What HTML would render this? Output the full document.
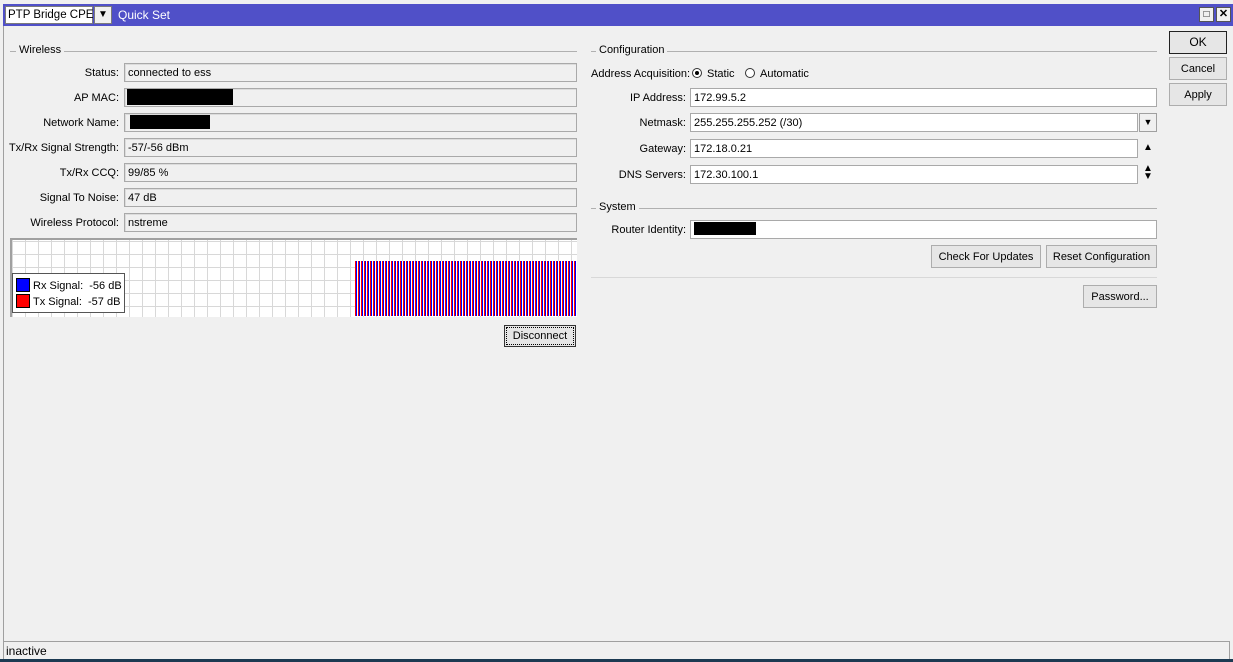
<!DOCTYPE html>
<html><head><style>
*{box-sizing:border-box}
body{margin:0;width:1233px;height:662px;background:#f0f0f0;font-family:"Liberation Sans",Tahoma,sans-serif;font-size:11px;color:#000;position:relative;overflow:hidden}
.a{position:absolute;white-space:nowrap}
.lbl{position:absolute;text-align:right;white-space:nowrap;line-height:20px}
.ro{position:absolute;height:19px;border:1px solid #a9a9a9;background:#f0f0f0;padding-left:3px;line-height:18px;box-shadow:inset 1px 1px 0 #dcdcdc;white-space:nowrap}
.ed{position:absolute;height:19px;border:1px solid #a9a9a9;background:#fff;padding-left:3px;line-height:18px;white-space:nowrap}
.btn{position:absolute;border:1px solid #adadad;background:#e6e6e6;text-align:center;line-height:19px;white-space:nowrap}
.hd{position:absolute;height:1px;background:#b0b0b0}
.black{position:absolute;background:#000}
</style></head><body>
<div class="a" style="left:0;top:0;width:1233px;height:4px;background:#f0f0f0"></div>
<div class="a" style="left:3px;top:4px;width:1230px;height:22px;background:#5050c8"></div>
<div class="a" style="left:5px;top:6px;width:88px;height:18px;background:#fff;border:1px solid #7a7a7a;padding-left:2px;line-height:16px;font-size:11.5px">PTP Bridge CPE</div>
<div class="a" style="left:94px;top:6px;width:18px;height:18px;background:#f0f0f0;border:1px solid #7a7a7a;text-align:center;line-height:15px;font-size:10px">&#9660;</div>
<div class="a" style="left:118px;top:8px;color:#fff;line-height:14px;font-size:12px">Quick Set</div>
<div class="a" style="left:1199px;top:7px;width:15px;height:15px;background:#f0f0f0;border:1px solid #555;font-size:10px;text-align:center;line-height:13px">&#9633;</div>
<div class="a" style="left:1216px;top:7px;width:15px;height:15px;background:#f0f0f0;border:1px solid #555;font-size:11px;font-weight:bold;text-align:center;line-height:13px">✕</div>
<div class="a" style="left:3px;top:26px;width:1px;height:633px;background:#a0a0a0"></div>

<div class="hd" style="left:10px;top:51px;width:567px"></div>
<div class="a" style="left:16px;top:44px;padding:0 3px;background:#f0f0f0">Wireless</div>
<div class="lbl" style="right:1114px;top:63px">Status:</div><div class="ro" style="left:124px;top:63px;width:453px">connected to ess</div>
<div class="lbl" style="right:1114px;top:88px">AP MAC:</div><div class="ro" style="left:124px;top:88px;width:453px"></div><div class="black" style="left:127px;top:89px;width:106px;height:16px"></div>
<div class="lbl" style="right:1114px;top:113px">Network Name:</div><div class="ro" style="left:124px;top:113px;width:453px"></div><div class="black" style="left:130px;top:115px;width:80px;height:14px"></div>
<div class="lbl" style="right:1114px;top:138px">Tx/Rx Signal Strength:</div><div class="ro" style="left:124px;top:138px;width:453px">-57/-56 dBm</div>
<div class="lbl" style="right:1114px;top:163px">Tx/Rx CCQ:</div><div class="ro" style="left:124px;top:163px;width:453px">99/85 %</div>
<div class="lbl" style="right:1114px;top:188px">Signal To Noise:</div><div class="ro" style="left:124px;top:188px;width:453px">47 dB</div>
<div class="lbl" style="right:1114px;top:213px">Wireless Protocol:</div><div class="ro" style="left:124px;top:213px;width:453px">nstreme</div>

<div class="a" style="left:10px;top:238px;width:567px;height:79px;border-top:2px solid #a0a0a0;border-left:2px solid #a0a0a0;background-color:#fff;background-image:linear-gradient(90deg,#d8d8d8 1px,transparent 1px),linear-gradient(#d8d8d8 1px,transparent 1px);background-size:13px 13px;background-position:0 1px"></div>
<div class="a" style="left:355px;top:261px;width:222px;height:55px;background:repeating-linear-gradient(90deg,#f00 0 1px,#00f 1px 2px,#fff 2px 3px)"></div>
<div class="a" style="left:12px;top:273px;width:113px;height:40px;background:#fff;border:1px solid #555"></div>
<div class="a" style="left:16px;top:278px;width:14px;height:14px;background:#00f;border:1px solid #000"></div>
<div class="a" style="left:16px;top:294px;width:14px;height:14px;background:#f00;border:1px solid #000"></div>
<div class="a" style="left:33px;top:279px;line-height:14px">Rx Signal:&nbsp; -56 dB</div>
<div class="a" style="left:33px;top:295px;line-height:14px">Tx Signal:&nbsp; -57 dB</div>
<div class="btn" style="left:504px;top:325px;width:72px;height:22px;border:1px solid #333;outline:1px dotted #000;outline-offset:-3px;line-height:21px">Disconnect</div>

<div class="hd" style="left:591px;top:51px;width:566px"></div>
<div class="a" style="left:596px;top:44px;padding:0 3px;background:#f0f0f0">Configuration</div>
<div class="lbl" style="left:591px;top:64px">Address Acquisition:</div>
<div class="a" style="left:692px;top:68px;width:10px;height:10px;border-radius:50%;background:#fff;border:1px solid #333"></div><div class="a" style="left:695px;top:71px;width:4px;height:4px;border-radius:50%;background:#000"></div>
<div class="a" style="left:707px;top:64px;line-height:20px">Static</div>
<div class="a" style="left:745px;top:68px;width:10px;height:10px;border-radius:50%;background:#fff;border:1px solid #333"></div>
<div class="a" style="left:760px;top:64px;line-height:20px">Automatic</div>
<div class="lbl" style="right:547px;top:88px">IP Address:</div><div class="ed" style="left:690px;top:88px;width:467px">172.99.5.2</div>
<div class="lbl" style="right:547px;top:113px">Netmask:</div><div class="ed" style="left:690px;top:113px;width:448px">255.255.255.252 (/30)</div>
<div class="a" style="left:1139px;top:113px;width:18px;height:19px;border:1px solid #a0a0a0;background:#f0f0f0;text-align:center;font-size:9px;line-height:17px">&#9660;</div>
<div class="lbl" style="right:547px;top:139px">Gateway:</div><div class="ed" style="left:690px;top:139px;width:448px">172.18.0.21</div>
<div class="a" style="left:1143px;top:141px;font-size:10px;line-height:14px">&#9650;</div>
<div class="lbl" style="right:547px;top:165px">DNS Servers:</div><div class="ed" style="left:690px;top:165px;width:448px">172.30.100.1</div>
<div class="a" style="left:1143px;top:165px;font-size:10px;line-height:8px">&#9650;<br>&#9660;</div>

<div class="hd" style="left:591px;top:208px;width:566px"></div>
<div class="a" style="left:596px;top:201px;padding:0 3px;background:#f0f0f0">System</div>
<div class="lbl" style="right:547px;top:220px">Router Identity:</div><div class="ed" style="left:690px;top:220px;width:467px"></div><div class="black" style="left:694px;top:222px;width:62px;height:13px"></div>
<div class="btn" style="left:931px;top:245px;width:110px;height:23px;line-height:22px">Check For Updates</div>
<div class="btn" style="left:1046px;top:245px;width:111px;height:23px;line-height:22px">Reset Configuration</div>
<div class="a" style="left:591px;top:277px;width:566px;height:1px;background:#d8d8d8"></div>
<div class="btn" style="left:1083px;top:285px;width:74px;height:23px;line-height:22px">Password...</div>

<div class="btn" style="left:1169px;top:31px;width:58px;height:23px;border:1px solid #222;line-height:21px;font-size:12px">OK</div>
<div class="btn" style="left:1169px;top:57px;width:58px;height:23px;line-height:22px">Cancel</div>
<div class="btn" style="left:1169px;top:83px;width:58px;height:23px;line-height:22px">Apply</div>

<div class="a" style="left:4px;top:641px;width:1226px;height:1px;background:#a0a0a0"></div>
<div class="a" style="left:1229px;top:641px;width:1px;height:18px;background:#a0a0a0"></div>
<div class="a" style="left:6px;top:643px;line-height:16px;font-size:12px">inactive</div>
<div class="a" style="left:0;top:659px;width:1233px;height:3px;background:#1c3a52"></div>
</body></html>
